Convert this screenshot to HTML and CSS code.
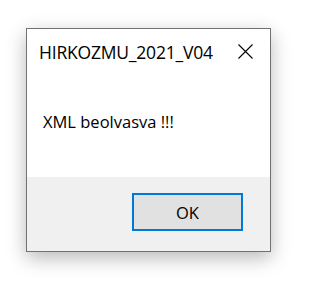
FILE: index.html
```html
<!DOCTYPE html>
<html>
<head>
<meta charset="utf-8">
<link rel="stylesheet" href="styles.css">
</head>
<body>
<div class="window">
  <div class="titlebar">
    <span class="title">HIRKOZMU_2021_V04</span>
    <svg class="close" width="15" height="15" viewBox="0 0 15 15"><path d="M0.5 0.5 L14.5 14.5 M14.5 0.5 L0.5 14.5" stroke="#000" stroke-width="1.1" fill="none"/></svg>
  </div>
  <div class="content">
    <p class="message">XML beolvasva !!!</p>
  </div>
  <div class="footer">
    <button class="btn">OK</button>
  </div>
</div>
</body>
</html>
```
FILE: styles.css
```css
html, body {
  margin: 0;
  padding: 0;
  background: #fff;
}
body {
  width: 307px;
  height: 284px;
  overflow: hidden;
  font-family: "Open Sans", "Noto Sans", sans-serif;
}
.window {
  box-sizing: border-box;
  width: 245px;
  height: 224px;
  margin: 28px 0 0 26px;
  border: 1px solid #727272;
  background: #fff;
  display: flex;
  flex-direction: column;
  box-shadow: 0 6px 18px rgba(0,0,0,0.28);
}
.titlebar {
  height: 46px;
  display: flex;
  align-items: center;
  justify-content: space-between;
  padding: 0 17px 0 12px;
}
.title {
  font-size: 17.5px;
  color: #000;
  letter-spacing: -0.2px;
}
.close {
  display: block;
  margin-top: -2px;
}
.content {
  flex: 1;
  padding-left: 16px;
}
.message {
  margin: 35px 0 0;
  font-size: 16.5px;
  color: #000;
}
.footer {
  height: 74px;
  background: #f0f0f0;
  display: flex;
  justify-content: flex-end;
  align-items: flex-start;
  padding: 16px 27px 0 0;
  box-sizing: border-box;
}
.btn {
  box-sizing: border-box;
  width: 111px;
  height: 38px;
  border: 2px solid #0078d7;
  background: #e1e1e1;
  font-family: "Open Sans", "Noto Sans", sans-serif;
  font-size: 16.5px;
  color: #000;
  padding: 0;
}
```
